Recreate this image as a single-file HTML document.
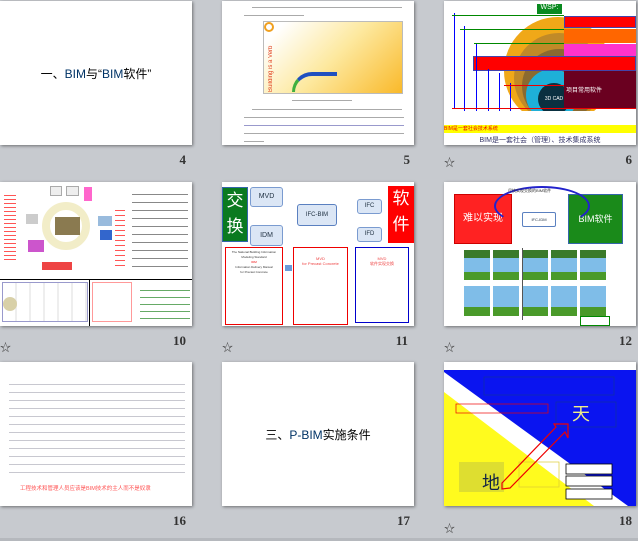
<!DOCTYPE html>
<html><head><meta charset="utf-8"><style>
*{margin:0;padding:0;box-sizing:border-box}
body{width:638px;height:541px;background:#c7cacf;position:relative;overflow:hidden;font-family:"Liberation Sans","Noto Sans CJK SC",sans-serif}
.s{position:absolute;width:192px;height:144px;background:#fff;box-shadow:1px 1px 3px rgba(0,0,0,.45);overflow:hidden}
.n{position:absolute;font:bold 13px "Liberation Serif",serif;color:#333;text-align:right;width:30px}
.st{position:absolute;font-size:11px;color:#444}
.a{position:absolute}
.line{position:absolute;height:1px;background:#aaa}
</style></head><body>

<!-- row 1 -->
<div class="s" style="left:0;top:1px">
<div class="a" style="left:0;top:64px;width:192px;text-align:center;font-size:12px;color:#000">一、<span style="color:#036">BIM</span>与“<span style="color:#036">BIM</span>软件”</div>
</div>
<div class="n" style="left:156px;top:152px">4</div>

<div class="s" style="left:222px;top:1px">
<div class="line" style="left:30px;top:6px;width:150px"></div>
<div class="line" style="left:22px;top:14px;width:60px"></div>
<div class="a" style="left:41px;top:20px;width:140px;height:73px;border:1px solid #bbb;background:linear-gradient(135deg,#fff 10%,#fde9a0 50%,#f9b92a)">
<div class="a" style="left:4px;top:10px;width:20px;height:60px;color:#e04020;font-size:6px;writing-mode:vertical-rl;transform:rotate(180deg)">Building is a Verb</div>
<div class="a" style="left:28px;top:50px;width:45px;height:20px;border-top:4px solid #2050c0;border-left:3px solid #40b040;border-radius:40px 0 0 0"></div>
<div class="a" style="left:0;top:0;width:10px;height:10px;border-radius:50%;border:2px solid #f0a020"></div>
</div>
<div class="line" style="left:70px;top:99px;width:60px"></div>
<div class="line" style="left:30px;top:108px;width:150px"></div>
<div class="line" style="left:22px;top:116px;width:160px"></div>
<div class="line" style="left:22px;top:124px;width:160px;background:#99c"></div>
<div class="line" style="left:22px;top:132px;width:160px"></div>
<div class="line" style="left:22px;top:140px;width:20px"></div>
</div>
<div class="n" style="left:380px;top:152px">5</div>

<div class="s" style="left:444px;top:1px">
<div class="a" style="left:60px;top:16px;width:108px;height:108px;border-radius:50%;background:#f0a818"></div>
<div class="a" style="left:70px;top:32px;width:90px;height:90px;border-radius:50%;background:#c08a28"></div>
<div class="a" style="left:78px;top:48px;width:74px;height:74px;border-radius:50%;background:#8a6a30"></div>
<div class="a" style="left:82px;top:68px;width:52px;height:52px;border-radius:50%;background:#1eb0d8"></div>
<div class="a" style="left:94px;top:82px;width:32px;height:32px;border-radius:50%;background:#0a3040;color:#fff;font-size:5px;line-height:32px;text-align:center">3D CAD</div>
<div class="a" style="left:93px;top:3px;width:25px;height:10px;background:#0a8a20;color:#fff;font-size:7px;text-align:center">WSP:</div>
<div class="a" style="left:120px;top:15px;width:72px;height:12px;background:#f00;border:1px solid #44a"></div>
<div class="a" style="left:120px;top:28px;width:72px;height:14px;background:#f60"></div>
<div class="a" style="left:120px;top:43px;width:72px;height:13px;background:#f3c"></div>
<div class="a" style="left:120px;top:70px;width:72px;height:37px;background:#6a0020;color:#fff;font-size:6px;padding:14px 0 0 2px">项目常用软件</div>
<div class="a" style="left:29px;top:55px;width:163px;height:15px;background:#f00;border:1px solid #44a"></div>
<div class="a" style="left:10px;top:12px;width:1px;height:96px;background:#00f"></div>
<div class="a" style="left:20px;top:25px;width:1px;height:85px;background:#00f"></div>
<div class="a" style="left:32px;top:42px;width:1px;height:68px;background:#00f"></div>
<div class="a" style="left:44px;top:68px;width:1px;height:42px;background:#00f"></div>
<div class="a" style="left:55px;top:72px;width:1px;height:38px;background:#00f"></div>
<div class="a" style="left:66px;top:82px;width:1px;height:28px;background:#00f"></div>
<div class="a" style="left:8px;top:14px;width:112px;height:1px;background:#080"></div>
<div class="a" style="left:16px;top:28px;width:104px;height:1px;background:#080"></div>
<div class="a" style="left:30px;top:42px;width:90px;height:1px;background:#080"></div>
<div class="a" style="left:60px;top:84px;width:60px;height:1px;background:#e00"></div>
<div class="a" style="left:8px;top:107px;width:184px;height:1px;background:#e00"></div>
<div class="a" style="left:0;top:110px;width:192px;height:14px;background:#fff"></div>
<div class="a" style="left:0;top:124px;width:192px;height:8px;background:#ff0;color:#e00;font-size:5px;line-height:8px">BIM是一套社会技术系统</div>
<div class="a" style="left:0;top:134px;width:192px;height:10px;background:#fff;text-align:center;font-size:7px;color:#336">BIM是一套社会（管理）、技术集成系统</div>
</div>
<div class="st" style="left:444px;top:154px">☆</div>
<div class="n" style="left:602px;top:152px">6</div>

<!-- row 2 -->
<div class="s" style="left:0;top:182px">
<div class="a" style="left:42px;top:20px;width:48px;height:48px;border-radius:50%;border:8px solid #f2edc8"></div>
<div class="a" style="left:55px;top:35px;width:25px;height:18px;background:#8a7a50"></div>
<div class="a" style="left:26px;top:32px;width:12px;height:10px;background:#ccc"></div>
<div class="a" style="left:50px;top:4px;width:12px;height:10px;background:#eee;border:1px solid #aaa"></div>
<div class="a" style="left:66px;top:4px;width:13px;height:10px;background:#eee;border:1px solid #aaa"></div>
<div class="a" style="left:84px;top:5px;width:8px;height:14px;background:#f6c"></div>
<div class="a" style="left:98px;top:34px;width:14px;height:10px;background:#9bd"></div>
<div class="a" style="left:100px;top:48px;width:12px;height:10px;background:#36c"></div>
<div class="a" style="left:28px;top:58px;width:16px;height:12px;background:#c5c"></div>
<div class="a" style="left:42px;top:80px;width:30px;height:8px;background:#e44"></div>
<div class="a" style="left:4px;top:10px;width:12px;height:70px;background:repeating-linear-gradient(#fff 0 3px,#f55 3px 4px)"></div>
<div class="a" style="left:115px;top:24px;width:10px;height:60px;background:repeating-linear-gradient(#fff 0 4px,#f55 4px 5px)"></div>
<div class="a" style="left:132px;top:5px;width:56px;height:86px;background:repeating-linear-gradient(#fff 0 7px,#888 7px 8px)"></div>
<div class="a" style="left:0;top:97px;width:192px;height:1px;background:#000"></div>
<div class="a" style="left:89px;top:97px;width:1px;height:47px;background:#000"></div>
<div class="a" style="left:2px;top:100px;width:86px;height:40px;border:1px solid #99c;background:repeating-linear-gradient(90deg,#fff 0 12px,#eee 12px 14px)"></div>
<div class="a" style="left:3px;top:115px;width:14px;height:14px;border-radius:50%;background:#d8d0a8"></div>
<div class="a" style="left:92px;top:100px;width:40px;height:40px;border:1px solid #f99"></div>
<div class="a" style="left:140px;top:102px;width:50px;height:36px;background:repeating-linear-gradient(#fff 0 6px,#6a6 6px 7px)"></div>
</div>
<div class="st" style="left:0;top:339px">☆</div>
<div class="n" style="left:156px;top:333px">10</div>

<div class="s" style="left:222px;top:182px">
<div class="a" style="left:0;top:5px;width:26px;height:55px;background:#0a7a20;border:1px solid #36a;color:#fff;font-size:17px;line-height:26px;text-align:center">交<br>换</div>
<div class="a" style="left:28px;top:5px;width:33px;height:20px;background:#dbe6f5;border:1px solid #7a9bd0;border-radius:3px;font-size:7px;line-height:18px;text-align:center;color:#234">MVD</div>
<div class="a" style="left:28px;top:43px;width:33px;height:21px;background:#dbe6f5;border:1px solid #7a9bd0;border-radius:3px;font-size:7px;line-height:19px;text-align:center;color:#234">IDM</div>
<div class="a" style="left:75px;top:22px;width:40px;height:22px;background:#dbe6f5;border:1px solid #5a80c0;border-radius:3px;font-size:6px;line-height:20px;text-align:center;color:#234">IFC-BIM</div>
<div class="a" style="left:135px;top:17px;width:25px;height:15px;background:#dbe6f5;border:1px solid #7a9bd0;border-radius:3px;font-size:6px;line-height:13px;text-align:center;color:#234">IFC</div>
<div class="a" style="left:135px;top:45px;width:25px;height:15px;background:#dbe6f5;border:1px solid #7a9bd0;border-radius:3px;font-size:6px;line-height:13px;text-align:center;color:#234">IFD</div>
<div class="a" style="left:166px;top:4px;width:26px;height:57px;background:#f00;color:#fff;font-size:17px;line-height:26px;text-align:center">软<br>件</div>
<div class="a" style="left:3px;top:65px;width:58px;height:78px;border:1px solid #e00;font-size:3px;color:#333;text-align:center;line-height:5px;padding-top:2px">The National Building Information Modeling Standard<br><span style="color:#e00">IDM</span><br>Information Delivery Manual<br>for Precast Concrete</div>
<div class="a" style="left:63px;top:83px;width:7px;height:6px;background:#6a9ad8"></div>
<div class="a" style="left:71px;top:65px;width:55px;height:78px;border:1px solid #e00;font-size:4px;color:#e44;text-align:center;padding-top:8px">MVD<br>for Precast Concrete</div>
<div class="a" style="left:133px;top:65px;width:54px;height:76px;border:1px solid #00c;font-size:4px;color:#e44;text-align:center;padding-top:8px">MVD<br>软件实现交换</div>
</div>
<div class="st" style="left:222px;top:339px">☆</div>
<div class="n" style="left:378px;top:333px">11</div>

<div class="s" style="left:444px;top:182px">
<div class="a" style="left:10px;top:12px;width:58px;height:50px;background:#f22;border:1px solid #c00;color:#fff;font-size:10px;line-height:48px;text-align:center">难以实现</div>
<div class="a" style="left:124px;top:12px;width:55px;height:50px;background:#1a8a1a;border:1px solid #36a;color:#fff;font-size:9px;line-height:48px;text-align:center">BIM软件</div>
<div class="a" style="left:78px;top:30px;width:34px;height:15px;border:1px solid #5a80c0;border-radius:2px;font-size:4px;line-height:13px;text-align:center;color:#234">IFC-IDM</div>
<div class="a" style="left:50px;top:4px;width:96px;height:40px;border:2px solid #22c;border-radius:50%;border-bottom-color:transparent"></div>
<div class="a" style="left:64px;top:6px;font-size:4px;color:#333">尽快实现交换的BIM软件</div>
<div class="a" style="left:20px;top:68px;width:144px;height:66px;background:repeating-linear-gradient(90deg,#7fbde8 0 26px,#fff 26px 29px)"></div>
<div class="a" style="left:20px;top:90px;width:144px;height:8px;background:repeating-linear-gradient(90deg,#4a9a2a 0 26px,#fff 26px 29px)"></div>
<div class="a" style="left:20px;top:98px;width:144px;height:6px;background:#fff"></div>
<div class="a" style="left:20px;top:125px;width:144px;height:9px;background:repeating-linear-gradient(90deg,#4a9a2a 0 26px,#fff 26px 29px)"></div>
<div class="a" style="left:20px;top:68px;width:144px;height:8px;background:repeating-linear-gradient(90deg,#3a7a2a 0 26px,#fff 26px 29px)"></div>
<div class="a" style="left:78px;top:66px;width:1px;height:72px;background:#555"></div>
<div class="a" style="left:136px;top:134px;width:30px;height:10px;border:1px solid #080"></div>
</div>
<div class="st" style="left:444px;top:339px">☆</div>
<div class="n" style="left:602px;top:333px">12</div>

<!-- row 3 -->
<div class="s" style="left:0;top:362px">
<div class="a" style="left:9px;top:17px;width:176px;height:100px;background:repeating-linear-gradient(#fff 0 5px,#c8c8d0 5px 6px,#fff 6px 8px)"></div>
<div class="a" style="left:20px;top:122px;font-size:5.5px;color:#f55">工程技术和管理人员应该是BIM技术的主人而不是奴隶</div>
</div>
<div class="n" style="left:156px;top:513px">16</div>

<div class="s" style="left:222px;top:362px">
<div class="a" style="left:0;top:64px;width:192px;text-align:center;font-size:12px;color:#000">三、<span style="color:#036">P-BIM</span>实施条件</div>
</div>
<div class="n" style="left:380px;top:513px">17</div>

<div class="s" style="left:444px;top:362px">
<svg width="192" height="144" style="position:absolute;left:0;top:0">
<polygon points="0,8 192,8 192,144 184,144 0,10" fill="#0a14f0"/>
<polygon points="0,30 0,144 150,144" fill="#fffb1e"/>
<rect x="40" y="15" width="130" height="18" fill="none" stroke="#1030a0" stroke-width=".7"/>
<rect x="112" y="40" width="60" height="25" fill="none" stroke="#1030a0" stroke-width=".7"/>
<rect x="12" y="42" width="92" height="9" fill="none" stroke="#e00" stroke-width=".7"/>
<rect x="75" y="100" width="40" height="25" fill="none" stroke="#dc3" stroke-width=".7"/>
<rect x="15" y="100" width="45" height="30" fill="#dede30"/>
<rect x="122" y="102" width="46" height="10" fill="#fff" stroke="#000" stroke-width=".8"/>
<rect x="122" y="114" width="46" height="10" fill="#fff" stroke="#000" stroke-width=".8"/>
<rect x="122" y="127" width="46" height="10" fill="#fff" stroke="#000" stroke-width=".8"/>
<polygon points="58,121 112,65 110,62 124,62 124,76 121,70 66,126 58,127" fill="none" stroke="#e00" stroke-width="1.2"/>
<text x="128" y="58" font-size="18" fill="#ee8" font-family="Noto Sans CJK SC">天</text>
<text x="38" y="127" font-size="18" fill="#124" font-family="Noto Sans CJK SC">地</text>
</svg>
</div>
<div class="st" style="left:444px;top:520px">☆</div>
<div class="n" style="left:602px;top:513px">18</div>

<div class="a" style="left:0;top:538px;width:638px;height:3px;background:#b5b8bd"></div>
</body></html>
